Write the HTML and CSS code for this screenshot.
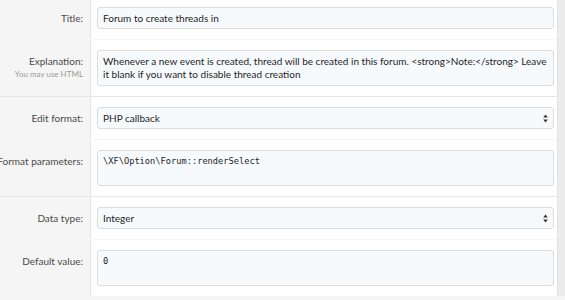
FILE: index.html
```html
<!DOCTYPE html>
<html lang="en">

<head>
    <meta charset="UTF-8">
    <meta name="viewport" content="width=device-width, initial-scale=1.0">
    <title>Option</title>
    <link rel="stylesheet" href="styles.css">
</head>

<body>
    <div class="page">
        <div class="form">
            <div class="group">
                <div class="row">
                    <div class="label"><span>Title:</span></div>
                    <div class="field">
                        <div class="input">Forum to create threads in</div>
                    </div>
                </div>
                <div class="row">
                    <div class="label">
                        <span>Explanation:</span>
                        <span class="hint">You may use HTML</span>
                    </div>
                    <div class="field">
                        <div class="input textarea">Whenever a new event is created, thread will be created in this forum. &lt;strong&gt;Note:&lt;/strong&gt; Leave it blank if you want to disable thread creation</div>
                    </div>
                </div>
            </div>

            <div class="group">
                <div class="row">
                    <div class="label"><span>Edit format:</span></div>
                    <div class="field">
                        <div class="input select">
                            <span>PHP callback</span>
                            <svg class="arrows" width="5" height="9" viewBox="0 0 5 9"><path d="M2.5 0.5L4.8 3.6H0.2Z M2.5 8.5L4.8 5.4H0.2Z" fill="#333"/></svg>
                        </div>
                    </div>
                </div>
                <div class="row">
                    <div class="label"><span>Format parameters:</span></div>
                    <div class="field">
                        <div class="input textarea code">\XF\Option\Forum::renderSelect</div>
                    </div>
                </div>
            </div>

            <div class="group">
                <div class="row">
                    <div class="label"><span>Data type:</span></div>
                    <div class="field">
                        <div class="input select">
                            <span>Integer</span>
                            <svg class="arrows" width="5" height="9" viewBox="0 0 5 9"><path d="M2.5 0.5L4.8 3.6H0.2Z M2.5 8.5L4.8 5.4H0.2Z" fill="#333"/></svg>
                        </div>
                    </div>
                </div>
                <div class="row">
                    <div class="label"><span>Default value:</span></div>
                    <div class="field">
                        <div class="input textarea code">0</div>
                    </div>
                </div>
            </div>
        </div>
        <div class="side"></div>
    </div>
</body>

</html>
```

FILE: styles.css
```css
body {
    margin: 0;
    background-color: #f5f5f5;
    font-family: Lato, "Noto Sans", sans-serif;
    font-size: 10px;
    color: #1e1e1e;
}

.page {
    display: flex;
    margin-top: -3px;
}

.form {
    width: 557px;
}

.side {
    flex: 1;
    background-color: #ececec;
    border-left: 1px solid #e2e2e2;
}

.group {
    border-bottom: 1px solid #e6e6e6;
    display: flex;
    flex-direction: column;
    gap: 1px;
}

.group:last-child {
    border-bottom: none;
}

.row {
    display: grid;
    grid-template-columns: 90px 1fr;
}

.label {
    display: flex;
    flex-direction: column;
    align-items: flex-end;
    padding: 15px 7px 0 0;
    background-color: #f5f5f5;
    color: #4a4a4a;
    white-space: nowrap;
    overflow: hidden;
    text-align: right;
}

.hint {
    font-size: 8px;
    color: #9a9a9a;
    margin-top: 2px;
}

.field {
    padding: 10px 3px 10px 6px;
    background-color: #fff;
    border-left: 1px solid #e4e4e4;
}

.input {
    box-sizing: border-box;
    height: 22px;
    padding: 4px 4px 0 5px;
    line-height: 13px;
    background-color: #f7fafd;
    border: 1px solid #dcdcdc;
    border-radius: 3px;
}

.textarea {
    height: 36px;
}

.select {
    display: flex;
    justify-content: space-between;
    align-items: center;
    padding-top: 0;
}

.arrows {
    margin-right: 1px;
}

.code {
    font-family: "DejaVu Sans Mono", monospace;
    font-size: 8.7px;
}
```
